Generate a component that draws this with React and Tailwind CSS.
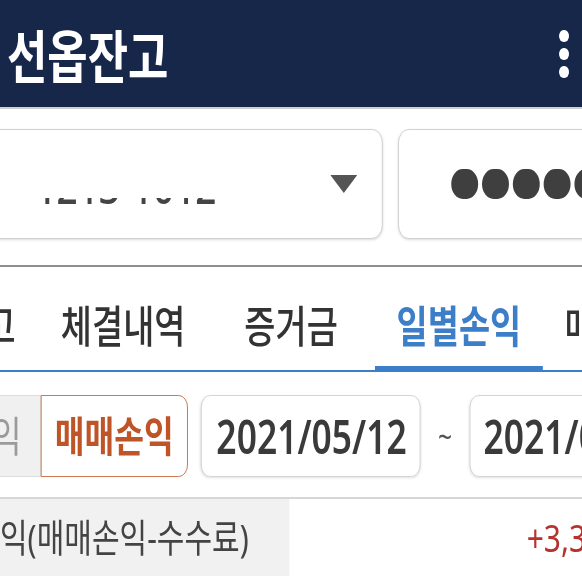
import React from 'react';

const tabs = [
  { label: '잔고', width: 'w-[142px]' },
  { label: '체결내역', width: 'w-[218px]' },
  { label: '증거금', width: 'w-[218px]' },
  { label: '일별손익', width: 'w-[218px]', active: true },
  { label: '매매내역', width: 'w-[218px]' },
];

function App() {
  return (
    <div className="w-[582px] h-[576px] overflow-hidden bg-white">
      {/* the capture is squeezed sideways, so the page is laid out wider and scaled back */}
      <div className="w-[756px] origin-top-left scale-x-[0.77] font-['Noto_Sans','Noto_Sans_CJK_KR',sans-serif]">
        <header className="h-[107px] bg-[#172749] flex items-center justify-between pl-[9px] pr-[17px]">
          <h1 className="text-[57px] font-bold text-white leading-none pt-[6px]">선옵잔고</h1>
          <div className="flex flex-col gap-[6px]">
            <span className="w-[13px] h-[12px] rounded-full bg-white" />
            <span className="w-[13px] h-[12px] rounded-full bg-white" />
            <span className="w-[13px] h-[12px] rounded-full bg-white" />
          </div>
        </header>
        <div className="h-[2px] bg-[#cfcfcf]" />

        <div className="flex gap-[20px] mt-[20px] ml-[-20px]">
          <div className="w-[517px] h-[110px] shrink-0 rounded-[14px] border border-[#cdcdcd] bg-white shadow-[0_1px_3px_rgba(0,0,0,0.15)] flex items-center justify-between pl-[65px] pr-[32px]">
            <div className="h-[7px] mt-[34px] overflow-hidden flex items-end">
              <span className="text-[48px] leading-none text-[#444] font-medium -mb-[5px] whitespace-nowrap">1213-1012</span>
            </div>
            <svg width="35" height="18" viewBox="0 0 35 18">
              <polygon points="0,0 35,0 17.5,18" fill="#555" />
            </svg>
          </div>
          <div className="w-[400px] h-[110px] shrink-0 rounded-[14px] border border-[#cdcdcd] bg-white shadow-[0_1px_3px_rgba(0,0,0,0.15)] flex items-center gap-[5px] pl-[68px]">
            <span className="w-[35px] h-[30px] shrink-0 rounded-full bg-[#3f3f3f]" />
            <span className="w-[35px] h-[30px] shrink-0 rounded-full bg-[#3f3f3f]" />
            <span className="w-[35px] h-[30px] shrink-0 rounded-full bg-[#3f3f3f]" />
            <span className="w-[35px] h-[30px] shrink-0 rounded-full bg-[#3f3f3f]" />
            <span className="w-[35px] h-[30px] shrink-0 rounded-full bg-[#3f3f3f]" />
            <span className="w-[35px] h-[30px] shrink-0 rounded-full bg-[#3f3f3f]" />
          </div>
        </div>

        <div className="mt-[26px] h-[2px] bg-[#8e8e8e]" />
        <nav className="h-[105px] border-b-2 border-[#3c7ec8] flex">
          <div className="flex ml-[-91px]">
            {tabs.map((t) => (
              <div
                key={t.label}
                className={`${t.width} shrink-0 flex items-center justify-center pt-[18px] border-b-4 ${t.active ? 'border-[#3c7ec8]' : 'border-transparent'}`}
              >
                <span className={`text-[44px] leading-none whitespace-nowrap ${t.active ? 'font-bold text-[#3c7ec8]' : 'font-medium text-[#333]'}`}>
                  {t.label}
                </span>
              </div>
            ))}
          </div>
        </nav>

        <div className="mt-[23px] h-[82px] flex">
          <div className="w-[180px] ml-[-127px] shrink-0 bg-[#f0f0f0] border border-[#dcdcdc] flex items-center justify-end pr-[24px]">
            <span className="text-[42px] leading-none text-[#9a9a9a] whitespace-nowrap">실현손익</span>
          </div>
          <div className="w-[191px] shrink-0 bg-white border border-[#c4683a] rounded-r-[12px] flex items-center justify-center">
            <span className="text-[42px] leading-none font-semibold text-[#bf5427] whitespace-nowrap">매매손익</span>
          </div>
          <div className="w-[285px] ml-[17px] shrink-0 rounded-[12px] border border-[#d0d0d0] bg-white shadow-[0_1px_3px_rgba(0,0,0,0.12)] flex items-center pl-[19px]">
            <span className="text-[46px] leading-none font-semibold text-[#3a3a3a]">2021/05/12</span>
          </div>
          <div className="w-[64px] shrink-0 flex items-center justify-center">
            <span className="text-[32px] text-[#555] leading-none">~</span>
          </div>
          <div className="w-[300px] shrink-0 rounded-[12px] border border-[#d0d0d0] bg-white shadow-[0_1px_3px_rgba(0,0,0,0.12)] flex items-center pl-[17px]">
            <span className="text-[46px] leading-none font-semibold text-[#3a3a3a]">2021/05/12</span>
          </div>
        </div>

        <div className="mt-[20px] h-[2px] bg-[#d6d6d6]" />
        <div className="h-[100px] flex">
          <div className="w-[376px] shrink-0 bg-[#f1f1f1] flex justify-end pr-[53px] pt-[18px]">
            <span className="text-[39px] leading-none text-[#444] whitespace-nowrap">순손익(매매손익-수수료)</span>
          </div>
          <div className="flex-1 bg-white pl-[308px] pt-[18px]">
            <span className="text-[39px] leading-none text-[#b7322c] whitespace-nowrap">+3,350,000</span>
          </div>
        </div>
      </div>
    </div>
  );
}

export default App;
